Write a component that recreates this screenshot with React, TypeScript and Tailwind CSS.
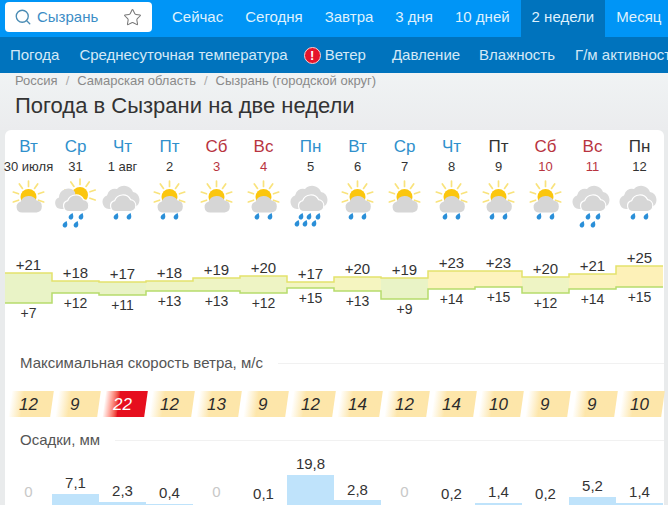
import { Search, Star } from 'lucide-react'

type Weather = 'sun' | 'sunBig' | 'double'

interface Day {
  name: string
  date: string
  nameColor: string
  dateColor: string
  weather: Weather
  drops: number
  high: string
  low: string
  top: number
  bottom: number
  fill: string
  wind: number
  rain: string
  bar: number
  rainY: number
}

const BLUE = 'text-[#2f90cc]'
const RED = 'text-[#b8343f]'
const BLACK = 'text-[#333333]'

const DAYS: Day[] = [
  { name: 'Вт', date: '30 июля', nameColor: BLUE, dateColor: BLACK, weather: 'sun', drops: 0, high: '+21', low: '+7', top: 273, bottom: 303, fill: '#e9f3c6', wind: 12, rain: '0', bar: 0, rainY: 492 },
  { name: 'Ср', date: '31', nameColor: BLUE, dateColor: BLACK, weather: 'sunBig', drops: 4, high: '+18', low: '+12', top: 281, bottom: 293, fill: '#e9f3c6', wind: 9, rain: '7,1', bar: 11, rainY: 483 },
  { name: 'Чт', date: '1 авг', nameColor: BLUE, dateColor: BLACK, weather: 'double', drops: 2, high: '+17', low: '+11', top: 282, bottom: 295, fill: '#e9f3c6', wind: 22, rain: '2,3', bar: 3, rainY: 491 },
  { name: 'Пт', date: '2', nameColor: BLUE, dateColor: BLACK, weather: 'sun', drops: 2, high: '+18', low: '+13', top: 281, bottom: 291, fill: '#eef4c4', wind: 12, rain: '0,4', bar: 1, rainY: 493 },
  { name: 'Сб', date: '3', nameColor: RED, dateColor: RED, weather: 'sun', drops: 0, high: '+19', low: '+13', top: 278, bottom: 291, fill: '#eef4c4', wind: 13, rain: '0', bar: 0, rainY: 492 },
  { name: 'Вс', date: '4', nameColor: RED, dateColor: RED, weather: 'sun', drops: 2, high: '+20', low: '+12', top: 276, bottom: 293, fill: '#eef4c4', wind: 9, rain: '0,1', bar: 0, rainY: 494 },
  { name: 'Пн', date: '5', nameColor: BLUE, dateColor: BLACK, weather: 'double', drops: 6, high: '+17', low: '+15', top: 282, bottom: 288, fill: '#f3f5c2', wind: 12, rain: '19,8', bar: 30, rainY: 464 },
  { name: 'Вт', date: '6', nameColor: BLUE, dateColor: BLACK, weather: 'sun', drops: 2, high: '+20', low: '+13', top: 277, bottom: 291, fill: '#f5f5c0', wind: 14, rain: '2,8', bar: 5, rainY: 490 },
  { name: 'Ср', date: '7', nameColor: BLUE, dateColor: BLACK, weather: 'sun', drops: 0, high: '+19', low: '+9', top: 278, bottom: 299, fill: '#e9f3c6', wind: 12, rain: '0', bar: 0, rainY: 492 },
  { name: 'Чт', date: '8', nameColor: BLUE, dateColor: BLACK, weather: 'sun', drops: 2, high: '+23', low: '+14', top: 271, bottom: 289, fill: '#fdf3bd', wind: 14, rain: '0,2', bar: 0, rainY: 494 },
  { name: 'Пт', date: '9', nameColor: BLACK, dateColor: BLACK, weather: 'sun', drops: 2, high: '+23', low: '+15', top: 271, bottom: 287, fill: '#fdf3bd', wind: 10, rain: '1,4', bar: 2, rainY: 492 },
  { name: 'Сб', date: '10', nameColor: RED, dateColor: RED, weather: 'sun', drops: 2, high: '+20', low: '+12', top: 277, bottom: 293, fill: '#eef4c4', wind: 9, rain: '0,2', bar: 0, rainY: 494 },
  { name: 'Вс', date: '11', nameColor: RED, dateColor: RED, weather: 'double', drops: 4, high: '+21', low: '+14', top: 274, bottom: 289, fill: '#fbf3be', wind: 9, rain: '5,2', bar: 8, rainY: 486 },
  { name: 'Пн', date: '12', nameColor: BLACK, dateColor: BLACK, weather: 'double', drops: 2, high: '+25', low: '+15', top: 266, bottom: 287, fill: '#fdf1b8', wind: 10, rain: '1,4', bar: 2, rainY: 492 },
]

const COL = 47
const CHART_TOP = 240

const DROPS: Record<number, [number, number][]> = {
  0: [],
  2: [[17, 38], [30, 38]],
  4: [[19, 38], [29, 38], [13, 46], [24, 46]],
  6: [[14, 38], [22, 38], [31, 38], [10, 45], [18, 45], [27, 45]],
}

function Drop({ x, y }: { x: number; y: number }) {
  return (
    <path
      d={`M${x + 1.6} ${y - 3}C${x + 2} ${y - 1} ${x + 2.6} ${y} ${x + 2.2} ${y + 1.2}A2.3 2.3 0 1 1 ${x - 2} ${y}C${x - 1.6} ${y - 1} ${x} ${y - 2} ${x + 1.6} ${y - 3}Z`}
      fill="#2a8fd8"
    />
  )
}

function Sun({ cx, cy }: { cx: number; cy: number }) {
  const rays = [-90, -55, -125, -18, -162, 18, 162]
  return (
    <g>
      {rays.map(a => {
        const r = (a * Math.PI) / 180
        return (
          <line
            key={a}
            x1={cx + 10.5 * Math.cos(r)}
            y1={cy + 10.5 * Math.sin(r)}
            x2={cx + 16 * Math.cos(r)}
            y2={cy + 16 * Math.sin(r)}
            stroke="#f9e37c"
            strokeWidth="1.7"
            strokeLinecap="round"
          />
        )
      })}
      <circle cx={cx} cy={cy} r="8" fill="#fbc60e" />
    </g>
  )
}

function Cloud({ dx = 0, dy = 0, fill = '#d6d6d6', outline = false }: { dx?: number; dy?: number; fill?: string; outline?: boolean }) {
  const d = 'M17 34.5a5.5 5.5 0 0 1-1.4-10.8A8.8 8.8 0 0 1 31.6 22.6a6 6 0 0 1 0 11.9Z'
  return (
    <path
      d={d}
      transform={`translate(${dx} ${dy})`}
      fill={fill}
      stroke={outline ? '#ffffff' : 'none'}
      strokeWidth={outline ? 1.2 : 0}
    />
  )
}

function BackCloud() {
  return (
    <path
      d="M10 31a7 7 0 0 1-2-13.5A8 8 0 0 1 18 11a9.5 9.5 0 0 1 16 3a8 8 0 0 1 2 15l-4 2Z"
      fill="#dadada"
    />
  )
}

function WeatherIcon({ weather, drops }: { weather: Weather; drops: number }) {
  return (
    <svg width="47" height="52" viewBox="0 0 47 52" className="block">
      {weather === 'sun' && <Sun cx={23.5} cy={19} />}
      {weather === 'sunBig' && (
        <g>
          <Sun cx={28} cy={17} />
          <path d="M9 31a6 6 0 0 1-2-11.6A9 9 0 0 1 23 14l2 17Z" fill="#dadada" />
        </g>
      )}
      {weather === 'double' && <BackCloud />}
      <Cloud outline={weather !== 'sun'} dy={weather === 'sun' ? 0 : -1} />
      {DROPS[drops].map(([x, y]) => (
        <Drop key={`${x}-${y}`} x={x} y={y} />
      ))}
    </svg>
  )
}

function TempBand() {
  const top = DAYS.map((d, i) => `${i === 0 ? 'M' : 'L'}${i * COL} ${d.top - CHART_TOP}H${(i + 1) * COL}`).join('')
  const bottom = DAYS.map((d, i) => `${i === 0 ? 'M' : 'L'}${i * COL} ${d.bottom - CHART_TOP}H${(i + 1) * COL}`).join('')
  return (
    <svg width="658" height="100" viewBox="0 0 658 100" className="absolute left-0 top-0">
      {DAYS.map((d, i) => (
        <rect key={i} x={i * COL} y={d.top - CHART_TOP} width={COL} height={d.bottom - d.top} fill={d.fill} />
      ))}
      <path d={top} fill="none" stroke="#e4e26c" strokeWidth="1.5" />
      <path d={bottom} fill="none" stroke="#b7dc6c" strokeWidth="1.5" />
    </svg>
  )
}

function WindChip({ value }: { value: number }) {
  const hot = value >= 20
  return (
    <div
      className={`ml-[5px] flex h-[26px] w-[42px] skew-x-[-8deg] items-center justify-center ${
        hot
          ? 'bg-linear-to-r from-white from-0% to-[#e60f1e] to-35%'
          : 'bg-linear-to-r from-white from-0% to-[#fde6aa] to-30%'
      }`}
    >
      <span className={`skew-x-[8deg] pr-[6px] text-[17px] italic leading-none ${hot ? 'text-white' : 'text-[#2b2b2b]'}`}>
        {value}
      </span>
    </div>
  )
}

function SectionTitle({ children }: { children: string }) {
  return (
    <div className="flex items-center gap-[15px] pl-[15px]">
      <span className="whitespace-nowrap text-[15px] leading-[20px] text-[#555555]">{children}</span>
      <div className="h-px flex-1 bg-[#f1f1f1]" />
    </div>
  )
}

const TOP_NAV = ['Сейчас', 'Сегодня', 'Завтра', '3 дня', '10 дней', '2 недели', 'Месяц']

export default function App() {
  return (
    <div className="h-[505px] w-[668px] overflow-hidden bg-[#e9ebec] font-['Liberation_Sans',Arial,sans-serif]">
      {/* Main nav */}
      <div className="flex h-[37px] items-start overflow-hidden bg-[#0095f6] pl-[5px]">
        <div className="mt-[2px] flex h-[30px] w-[147px] shrink-0 items-center rounded-[4px] bg-white pl-[9px]">
          <Search size={18} strokeWidth={1.8} className="shrink-0 text-[#4a8cb4]" />
          <span className="ml-[5px] text-[15px] text-[#3b8dc6]">Сызрань</span>
          <Star size={19} strokeWidth={1.3} className="ml-[25px] shrink-0 text-[#777777]" />
        </div>
        <nav className="ml-[9px] flex shrink-0">
          {TOP_NAV.map(item => (
            <span
              key={item}
              className={`flex h-[37px] items-center whitespace-nowrap px-[11px] pb-[3px] text-[15px] text-[#dff1fd] ${
                item === '2 недели' ? 'bg-[#0073bd]' : ''
              }`}
            >
              {item}
            </span>
          ))}
        </nav>
      </div>

      {/* Sub nav */}
      <div className="flex h-[36px] items-center overflow-hidden whitespace-nowrap bg-[#0073bd] pl-[10px] text-[15px] text-[#d4e9f7]">
        <span>Погода</span>
        <span className="ml-[20px]">Среднесуточная температура</span>
        <span className="ml-[16px] flex h-[17px] w-[17px] shrink-0 items-center justify-center rounded-full border border-[#fbd0d0] bg-[#e5142b] text-[13px] font-bold leading-none text-white">
          !
        </span>
        <span className="ml-[4px]">Ветер</span>
        <span className="ml-[26px]">Давление</span>
        <span className="ml-[19px]">Влажность</span>
        <span className="ml-[20px]">Г/м активность</span>
      </div>

      {/* Breadcrumbs + title */}
      <div className="flex h-[57px] flex-col bg-linear-to-b from-[#f0f3f4] to-[#ebecee] pl-[15px]">
        <div className="flex h-[16px] items-center gap-[8px] text-[13px] text-[#8a8a8a]">
          <span>Россия</span>
          <span className="text-[#aaaaaa]">/</span>
          <span>Самарская область</span>
          <span className="text-[#aaaaaa]">/</span>
          <span>Сызрань (городской округ)</span>
        </div>
        <h1 className="mt-[5px] text-[22px] font-normal leading-[24px] text-[#333333]">Погода в Сызрани на две недели</h1>
      </div>

      {/* Forecast card */}
      <div className="ml-[5px] w-[659px] rounded-t-[6px] bg-white">
        <div className="grid h-[110px] grid-cols-[repeat(14,47px)]">
          {DAYS.map((d, i) => (
            <div key={i} className="flex flex-col items-center">
              <span className={`mt-[8px] h-[18px] text-[17px] leading-[18px] ${d.nameColor}`}>{d.name}</span>
              <span className={`mt-[3px] h-[16px] whitespace-nowrap text-[13px] leading-[16px] ${d.dateColor}`}>{d.date}</span>
              <div className="mt-[3px]">
                <WeatherIcon weather={d.weather} drops={d.drops} />
              </div>
            </div>
          ))}
        </div>

        {/* Temperature band */}
        <div className="relative h-[113px] w-[658px]">
          <TempBand />
          <div className="relative grid grid-cols-[repeat(14,47px)]">
            {DAYS.map((d, i) => (
              <div key={i} className="flex flex-col items-center">
                <span
                  className="h-[18px] text-[15px] leading-[18px] text-[#333333]"
                  style={{ marginTop: d.top - CHART_TOP - 17 }}
                >
                  {d.high}
                </span>
                <span
                  className="h-[16px] text-[14px] leading-[16px] text-[#333333]"
                  style={{ marginTop: d.bottom - d.top + 1 }}
                >
                  {d.low}
                </span>
              </div>
            ))}
          </div>
        </div>

        <SectionTitle>Максимальная скорость ветра, м/с</SectionTitle>

        {/* Wind */}
        <div className="mt-[18px] grid grid-cols-[repeat(14,47px)]">
          {DAYS.map((d, i) => (
            <WindChip key={i} value={d.wind} />
          ))}
        </div>

        <div className="mt-[13px]">
          <SectionTitle>Осадки, мм</SectionTitle>
        </div>

        {/* Precipitation */}
        <div className="grid h-[55px] grid-cols-[repeat(14,47px)]">
          {DAYS.map((d, i) => (
            <div key={i} className="relative h-full">
              <div
                className={`text-center text-[15px] leading-[18px] ${d.rain === '0' ? 'text-[#c8c8c8]' : 'text-[#333333]'}`}
                style={{ marginTop: d.rainY - 450 - 9 }}
              >
                {d.rain}
              </div>
              {d.bar > 0 && (
                <div className="absolute bottom-0 left-0 w-full bg-[#bfe3fb]" style={{ height: d.bar }} />
              )}
            </div>
          ))}
        </div>
      </div>
    </div>
  )
}
